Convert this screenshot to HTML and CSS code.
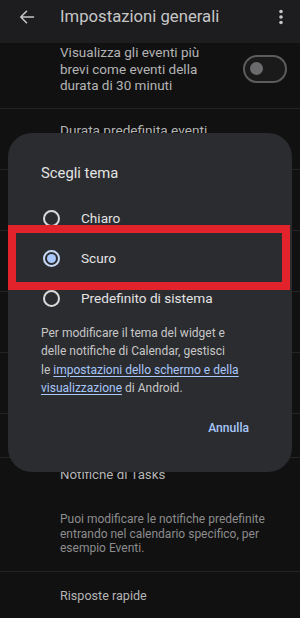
FILE: index.html
```html
<!DOCTYPE html>
<html lang="it">
<head>
<meta charset="utf-8">
<title>Impostazioni generali</title>
<link rel="stylesheet" href="styles.css">
</head>
<body>
<div class="screen">
  <header class="appbar">
    <span class="icon back">
      <svg width="20" height="20" viewBox="0 0 20 20" fill="none" stroke="currentColor" stroke-width="1.6" stroke-linecap="round" stroke-linejoin="round"><path d="M16.5 10H3.8M9.5 4.3L3.8 10l5.7 5.7"/></svg>
    </span>
    <h1 class="title">Impostazioni generali</h1>
    <span class="icon more">
      <svg width="6" height="20" viewBox="0 0 6 20" fill="currentColor"><circle cx="3" cy="4.5" r="1.8"/><circle cx="3" cy="10" r="1.8"/><circle cx="3" cy="15.5" r="1.8"/></svg>
    </span>
  </header>

  <main class="list">
    <div class="row row-toggle">
      <p class="row-text">Visualizza gli eventi più<br>brevi come eventi della<br>durata di 30 minuti</p>
      <span class="switch"><span class="thumb"></span></span>
    </div>
    <div class="row">
      <p class="row-title">Durata predefinita eventi</p>
      <p class="row-sub">60 minuti</p>
    </div>
    <div class="row">
      <p class="row-title">Tema</p>
      <p class="row-sub">Scuro</p>
    </div>
    <div class="row">
      <p class="row-title">Inizio della settimana</p>
      <p class="row-sub">Lunedì</p>
    </div>
    <div class="row">
      <p class="row-title">Fuso orario del dispositivo</p>
      <p class="row-sub">Ora dell'Europa centrale</p>
    </div>
    <div class="row">
      <p class="row-title">Notifiche di Calendar</p>
      <p class="row-sub">Attivate</p>
    </div>
    <div class="row">
      <p class="row-title">Altre notifiche</p>
    </div>
    <div class="row row-notif">
      <p class="row-title">Notifiche di Tasks</p>
      <p class="row-note">Puoi modificare le notifiche predefinite<br>entrando nel calendario specifico, per<br>esempio Eventi.</p>
    </div>
    <div class="row row-last">
      <p class="row-title">Risposte rapide</p>
    </div>
  </main>

  <section class="dialog" role="dialog" aria-labelledby="dlg-title">
    <h2 class="dialog-title" id="dlg-title">Scegli tema</h2>
    <div class="options">
      <label class="option"><span class="radio"></span><span class="option-label">Chiaro</span></label>
      <label class="option"><span class="radio checked"></span><span class="option-label">Scuro</span></label>
      <label class="option"><span class="radio"></span><span class="option-label">Predefinito di sistema</span></label>
    </div>
    <p class="dialog-text">Per modificare il tema del widget e<br>delle notifiche di Calendar, gestisci<br>le <a class="link" href="#">impostazioni dello schermo e della<br>visualizzazione</a> di Android.</p>
    <div class="actions"><button class="text-btn">Annulla</button></div>
  </section>

  <div class="highlight"></div>
</div>
</body>
</html>
```

FILE: styles.css
```css
html, body {
  margin: 0;
  padding: 0;
  background: #111112;
}

.screen {
  position: relative;
  width: 300px;
  height: 618px;
  overflow: hidden;
  background: #111112;
  font-family: Roboto, "Noto Sans", "Liberation Sans", sans-serif;
}

.appbar {
  height: 43px;
  box-sizing: border-box;
  padding-top: 6px;
  background: #1d1d1f;
  display: flex;
  align-items: flex-start;
  color: #c6c6c6;
}

.icon {
  display: flex;
  align-items: center;
  justify-content: center;
  height: 22px;
}

.back {
  width: 20px;
  margin-left: 17px;
}

.title {
  flex: 1;
  margin: 0 0 0 23px;
  font-size: 16.7px;
  line-height: 22px;
  font-weight: 400;
  color: #c6c6c6;
  white-space: nowrap;
}

.more {
  width: 6px;
  margin-right: 16px;
}

.list {
  display: flex;
  flex-direction: column;
}

.row {
  padding: 13px 12px 13px 60px;
  border-bottom: 1px solid #242426;
}

.row p {
  margin: 0;
}

.row-title {
  font-size: 13.6px;
  line-height: 17px;
  color: #b4b4b4;
  white-space: nowrap;
}

.row-sub {
  font-size: 12px;
  line-height: 17px;
  color: #8a8a8a;
}

.row-toggle {
  display: flex;
  align-items: center;
  justify-content: space-between;
  padding-top: 1px;
  padding-bottom: 14px;
  padding-right: 13px;
}

.row-text {
  font-size: 13.5px;
  line-height: 16.5px;
  color: #b4b4b4;
}

.switch {
  position: relative;
  width: 44px;
  height: 28px;
  box-sizing: border-box;
  border: 2px solid #5c5c5e;
  border-radius: 14px;
  background: #1a1a1b;
}

.thumb {
  position: absolute;
  left: 5px;
  top: 5.5px;
  width: 13px;
  height: 13px;
  border-radius: 50%;
  background: #6b6b6d;
}

.row-notif {
  padding-top: 8.5px;
  padding-bottom: 14.5px;
}

.row-notif .row-title {
  font-size: 13.3px;
}

.row-note {
  margin-top: 29px !important;
  font-size: 12px;
  line-height: 14.7px;
  color: #8c8c8c;
  white-space: nowrap;
}

.row-last {
  padding-top: 15.5px;
  border-bottom: none;
}

.row-last .row-title {
  font-size: 12.6px;
}

/* dialog */
.dialog {
  position: absolute;
  left: 8px;
  top: 133px;
  width: 284px;
  height: 339px;
  box-sizing: border-box;
  background: #2b2c30;
  border-radius: 24px;
  padding-top: 29px;
  display: flex;
  flex-direction: column;
}

.dialog-title {
  margin: 0;
  padding: 0 33px;
  font-size: 14.8px;
  line-height: 22px;
  font-weight: 400;
  color: #e3e3e3;
}

.options {
  margin-top: 14px;
  display: flex;
  flex-direction: column;
}

.option {
  height: 40px;
  display: flex;
  align-items: center;
  padding-left: 34.5px;
}

.radio {
  width: 17px;
  height: 17px;
  box-sizing: border-box;
  border: 2px solid #dadada;
  border-radius: 50%;
  display: flex;
  align-items: center;
  justify-content: center;
  flex: none;
}

.radio.checked {
  border-color: #c8d9f6;
}

.radio.checked::after {
  content: "";
  width: 9px;
  height: 9px;
  border-radius: 50%;
  background: #a8c7fa;
}

.option-label {
  margin-left: 21.5px;
  font-size: 13.6px;
  line-height: 20px;
  color: #e3e3e3;
}

.dialog-text {
  margin: 6px 0 0;
  padding: 0 33px;
  font-size: 12px;
  line-height: 18.3px;
  color: #c7c7c7;
  white-space: nowrap;
}

.link {
  color: #a8c7fa;
  text-decoration: underline;
  text-underline-offset: 2px;
}

.actions {
  margin-top: 21px;
  display: flex;
  justify-content: flex-end;
  padding-right: 43px;
}

.text-btn {
  border: none;
  background: none;
  padding: 0;
  font-family: inherit;
  font-size: 12.1px;
  line-height: 20px;
  font-weight: 500;
  color: #a8c7fa;
}

.highlight {
  position: absolute;
  left: 8px;
  top: 225px;
  width: 282px;
  height: 65px;
  box-sizing: border-box;
  border: 8px solid #e3232b;
}
```
